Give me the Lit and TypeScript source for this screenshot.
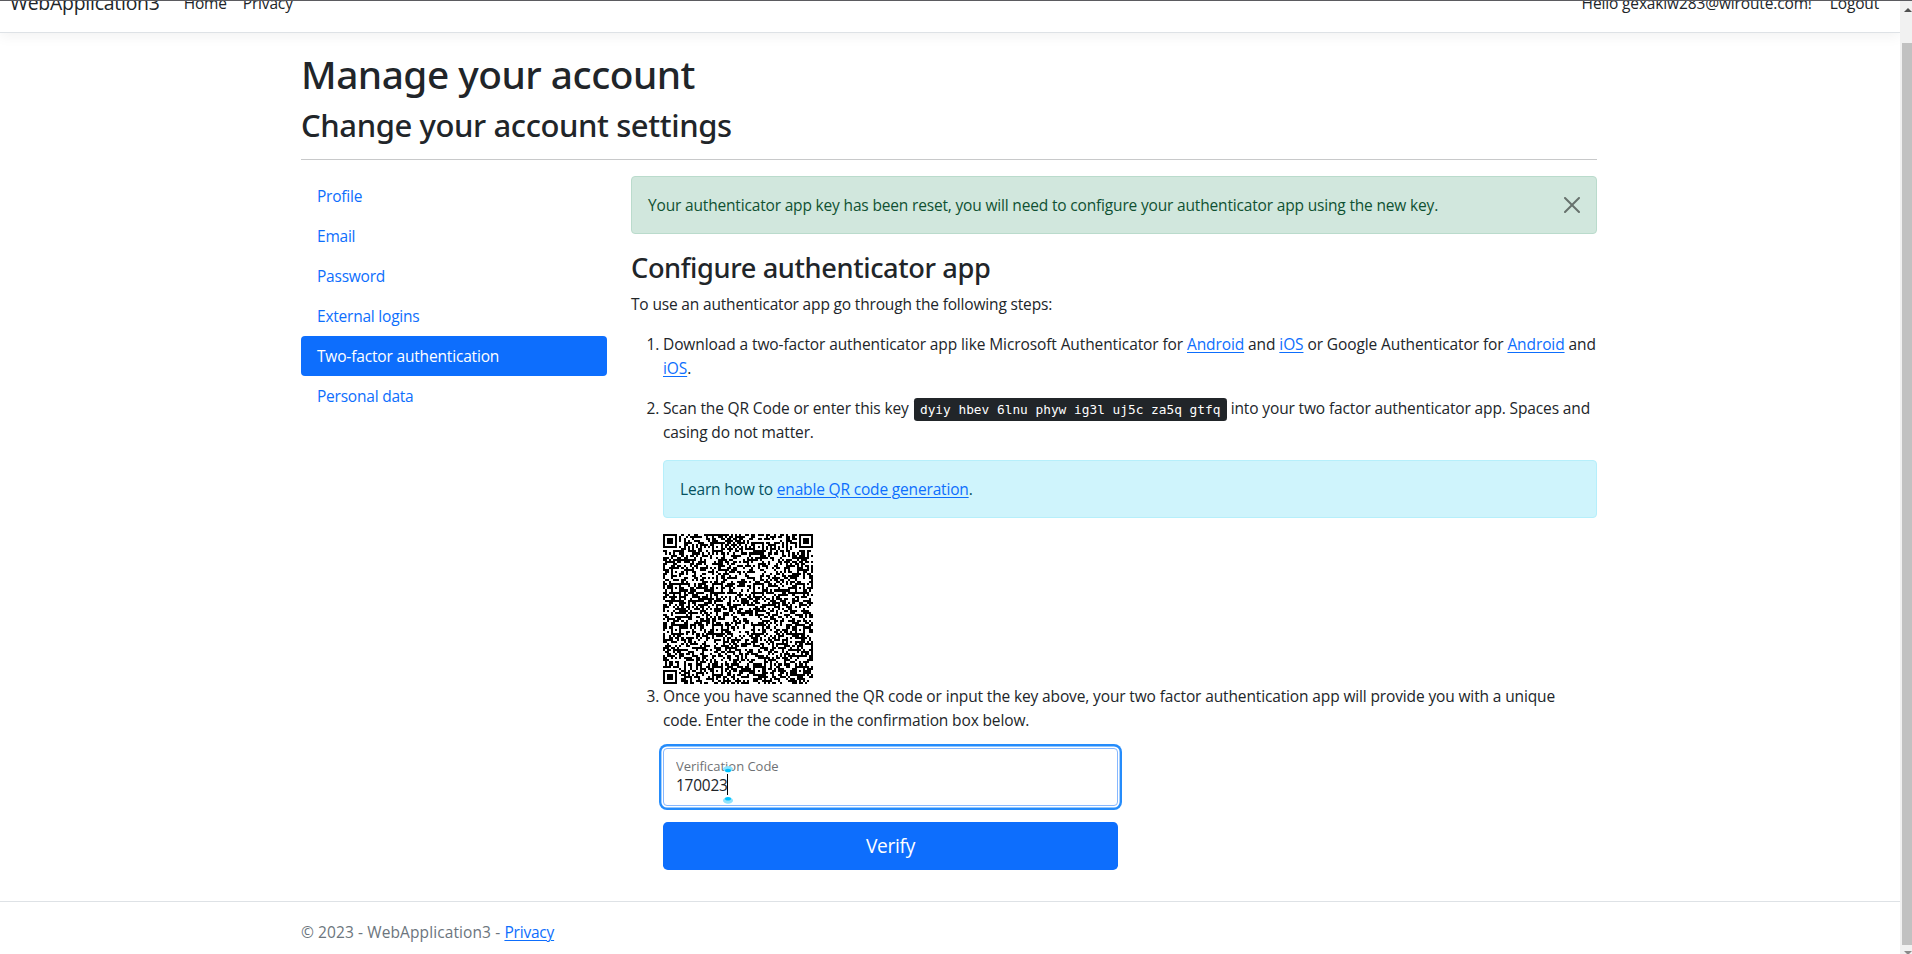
import { LitElement, html, css, svg } from "lit";
import { customElement, property } from "lit/decorators.js";
import { classMap } from "lit/directives/class-map.js";

const SIZE = 73;
const ALIGN = [6, 26, 46, 66];

/** Builds the dark-module path of a version 14 symbol. */
function qrPath(): string {
  const finder = (r: number, c: number): boolean | null => {
    for (const [fr, fc] of [[0, 0], [0, SIZE - 7], [SIZE - 7, 0]]) {
      const y = r - fr, x = c - fc;
      if (y < -1 || y > 7 || x < -1 || x > 7) continue;
      const d = Math.max(Math.abs(y - 3), Math.abs(x - 3));
      return d !== 2 && d !== 4;
    }
    return null;
  };
  const alignment = (r: number, c: number): boolean | null => {
    for (const ar of ALIGN) for (const ac of ALIGN) {
      if ((ar === 6 && (ac === 6 || ac === 66)) || (ar === 66 && ac === 6)) continue;
      const d = Math.max(Math.abs(r - ar), Math.abs(c - ac));
      if (d <= 2) return d !== 1;
    }
    return null;
  };
  let seed = 170023;
  const noise = () => {
    seed = (seed * 1664525 + 1013904223) >>> 0;
    return seed / 4294967296 < 0.5;
  };
  let d = "";
  for (let r = 0; r < SIZE; r++) for (let c = 0; c < SIZE; c++) {
    const n = noise();
    const timing = r === 6 || c === 6 ? (r + c) % 2 === 0 : null;
    if (finder(r, c) ?? alignment(r, c) ?? timing ?? n) d += `M${c} ${r}h1v1h-1z`;
  }
  return d;
}

@customElement("qr-code")
export class QrCode extends LitElement {
  static styles = css`
    :host { display: block; width: 150px; height: 150px; }
    svg { display: block; width: 100%; height: 100%; }
  `;
  render() {
    return html`<svg viewBox="0 0 73 73" shape-rendering="crispEdges">${svg`<path fill="#000" d=${qrPath()}></path>`}</svg>`;
  }
}

@customElement("manage-nav")
export class ManageNav extends LitElement {
  static styles = css`
    :host { display: flex; flex-direction: column; }
    a {
      height: 40px; line-height: 40px; padding: 0 16px; border-radius: 4px; letter-spacing: -0.22px;
      color: #0d6efd; text-decoration: none; white-space: nowrap;
    }
    .active { background: #0d6efd; color: #fff; letter-spacing: -0.17px; }
  `;
  @property() active = "";
  render() {
    return ["Profile", "Email", "Password", "External logins", "Two-factor authentication", "Personal data"].map(
      (t) => html`<a class=${classMap({ active: t === this.active })}>${t}</a>`
    );
  }
}

@customElement("app-root")
export class AppRoot extends LitElement {
  static styles = css`
    * { box-sizing: border-box; }
    :host {
      display: flex; width: 1912px; height: 954px; overflow: hidden; background: #fff; color: #212529;
      font-family: "Open Sans", sans-serif; font-size: 15.5px; line-height: 24px; letter-spacing: -0.17px;
      border-top: 1px solid #5b5b60; box-sizing: border-box;
    }
    a { color: #0d6efd; text-decoration: underline; text-underline-offset: 2px; text-decoration-thickness: 1px; }
    .page { width: 1900px; flex: none; height: 100%; overflow: hidden; }
    .navbar {
      margin-top: -25px; height: 57px; display: flex; align-items: center; padding: 0 21px 2px 10px;
      border-bottom: 1px solid #dee2e6; box-shadow: 0 4px 12px rgba(0,0,0,.05);
    }
    .brand { font-size: 19.4px; letter-spacing: -0.22px; margin-right: 24px; }
    .link { margin-right: 16px; }
    .grow { flex: 1; }
    .hello { margin-right: 18px; letter-spacing: -0.14px; }
    .container { margin-left: 301px; width: 1296px; padding-top: 17px; }
    h1, h2, h3 { margin: 0 0 8px; font-family: "Noto Sans", sans-serif; font-weight: 500; line-height: 1.2; white-space: nowrap; }
    h1 { font-size: 38.8px; height: 48px; line-height: 48px; letter-spacing: -0.49px; }
    h2 { font-size: 31px; height: 38px; line-height: 38px; letter-spacing: -0.4px; }
    h3 { font-size: 27.2px; height: 34px; line-height: 36px; letter-spacing: -0.38px; margin-bottom: 8px; }
    hr { margin: 15px 0 16px; border: 0; height: 1px; background: #c8c9ca; }
    .row { display: grid; grid-template-columns: 306px 966px; column-gap: 24px; }
    .alert { height: 58px; border: 1px solid; border-radius: 4px; padding: 0 16px; display: flex; align-items: center; white-space: pre; }
    .success { background: #d1e7dd; border-color: #badbcc; color: #0f5132; justify-content: space-between; margin-bottom: 16px; }
    .info { background: #cff4fc; border-color: #b6effb; color: #055160; margin: 16px 0; }
    .close { width: 16px; height: 16px; opacity: .5; }
    p { margin: 0; white-space: nowrap; }
    ol { margin: 16px 0 0; padding: 0 0 0 32px; }
    li p { letter-spacing: -0.135px; }
    li p.gap { letter-spacing: -0.1px; margin-bottom: 16px; }
    kbd {
      line-height: 1; padding: 4px 6.4px; margin-left: 1px; border-radius: 3.2px; background: #212529; color: #fff;
      font-family: "DejaVu Sans Mono", monospace; font-size: 12.8px; letter-spacing: 0;
    }
    .field { position: relative; width: 455px; margin-top: 16px; }
    input {
      display: block; width: 100%; height: 58px; padding: 22px 12px 6px; border: 1px solid #86b7fe; border-radius: 4px;
      box-shadow: 0 0 0 1.6px #fff, 0 0 0 4px #258cfb; outline: 0; background: #fff; color: #212529;
      font: inherit; font-size: 15.4px; letter-spacing: -0.2px;
    }
    label { position: absolute; left: 13px; top: 8px; line-height: 20px; font-size: 13px; letter-spacing: -0.03px; opacity: .65; }
    .caret { position: absolute; left: 58px; top: 17px; }
    button {
      display: block; width: 455px; height: 48px; margin-top: 16px; border: 0; border-radius: 4.8px; background: #0d6efd; color: #fff;
      font: inherit; font-size: 19.2px; letter-spacing: -0.3px; padding: 0;
    }
    footer { margin-top: 31px; border-top: 1px solid #dee2e6; padding-left: 301px; line-height: 60px; color: #6c757d; letter-spacing: 0.1px; }
    footer a { letter-spacing: -0.2px; }
    .track { width: 12px; background: #f1f1f1; display: flex; flex-direction: column; padding-left: 2px; overflow: hidden; }
    .thumb { height: 902px; background: #c1c1c1; flex: none; }
    .btn { height: 42px; flex: none; padding: 7px 0 0 2px; }
    .btn.down { padding-top: 6px; }
    .track svg, .caret { display: block; }
  `;

  render() {
    return html`
      <div class="page">
        <div class="navbar">
          <span class="brand">WebApplication3</span>
          <span class="link">Home</span><span>Privacy</span>
          <span class="grow"></span>
          <span class="hello">Hello gexakiw283@wiroute.com!</span><span>Logout</span>
        </div>
        <div class="container">
          <h1>Manage your account</h1>
          <h2>Change your account settings</h2>
          <hr />
          <div class="row">
            <manage-nav active="Two-factor authentication"></manage-nav>
            <div>
              <div class="alert success">
                <span>Your authenticator app key has been reset, you will need to configure your authenticator app using the new key.</span>
                <svg class="close" viewBox="0 0 16 16"><path d="M.293.293a1 1 0 011.414 0L8 6.586 14.293.293a1 1 0 111.414 1.414L9.414 8l6.293 6.293a1 1 0 01-1.414 1.414L8 9.414l-6.293 6.293a1 1 0 01-1.414-1.414L6.586 8 .293 1.707a1 1 0 010-1.414z"></path></svg>
              </div>
              <h3>Configure authenticator app</h3>
              <p>To use an authenticator app go through the following steps:</p>
              <ol>
                <li>
                  <p class="gap">Download a two-factor authenticator app like Microsoft Authenticator for <a>Android</a> and <a>iOS</a> or Google Authenticator for <a>Android</a> and<br /><a>iOS</a>.</p>
                </li>
                <li>
                  <p>Scan the QR Code or enter this key <kbd>dyiy hbev 6lnu phyw ig3l uj5c za5q gtfq</kbd> into your two factor authenticator app. Spaces and<br />casing do not matter.</p>
                  <div class="alert info">Learn how to <a>enable QR code generation</a>.</div>
                  <qr-code></qr-code>
                </li>
                <li>
                  <p>Once you have scanned the QR code or input the key above, your two factor authentication app will provide you with a unique<br />code. Enter the code in the confirmation box below.</p>
                  <div class="field">
                    <input value="170023" />
                    <label>Verification Code</label>
                    <svg class="caret" width="14" height="42" viewBox="0 0 14 42">
                      <ellipse cx="7" cy="4" rx="5" ry="3" fill="#8fe3fd"></ellipse>
                      <ellipse cx="7" cy="5.5" rx="3" ry="1.8" fill="#00c3ff"></ellipse>
                      <rect x="6" y="9" width="1" height="21" fill="#000"></rect>
                      <ellipse cx="7" cy="35.500" rx="5" ry="3.200" fill="#8fe3fd"></ellipse>
                      <ellipse cx="7" cy="33.800" rx="3" ry="1.800" fill="#00c3ff"></ellipse>
                    </svg>
                  </div>
                  <button>Verify</button>
                </li>
              </ol>
            </div>
          </div>
        </div>
        <footer>© 2023 - WebApplication3 - <a>Privacy</a></footer>
      </div>
      <div class="track">
        <div class="btn"><svg width="8" height="4"><path d="M0 4L4 0L8 4z" fill="#505050"></path></svg></div>
        <div class="thumb"></div>
        <div class="btn down"><svg width="8" height="4"><path d="M0 0h8L4 4z" fill="#8a8a8a"></path></svg></div>
      </div>
    `;
  }
}
